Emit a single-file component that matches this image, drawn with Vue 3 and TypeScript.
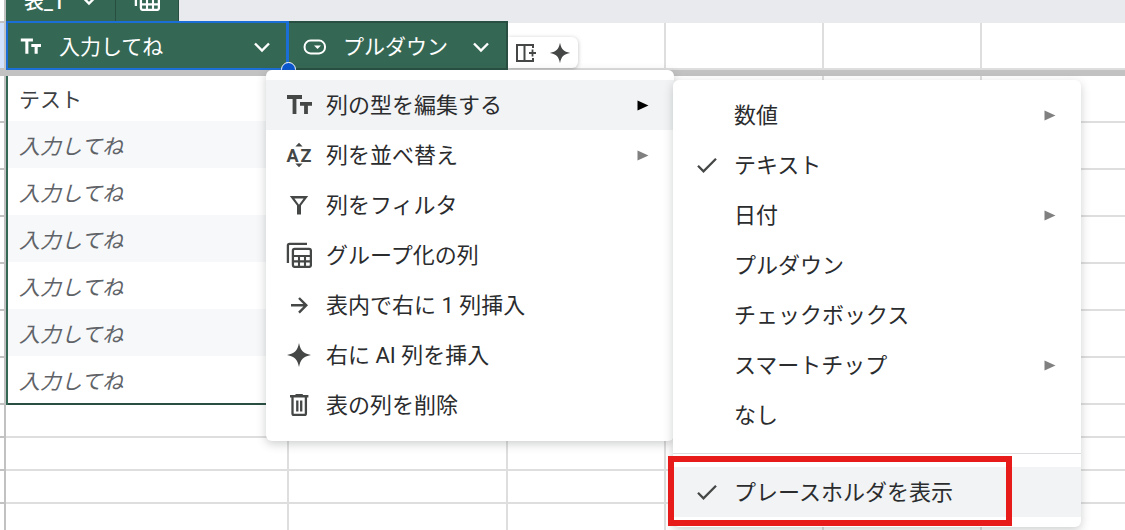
<script setup lang="ts">
import { ref } from 'vue'

interface MenuEntry {
  label: string
  icon?: string
  arrow?: boolean
  checked?: boolean
}

const tableName = ref('表_1')
const rows: { text: string; placeholder: boolean }[] = [
  { text: 'テスト', placeholder: false },
  ...Array.from({ length: 6 }, () => ({ text: '入力してね', placeholder: true })),
]
const emptyRows = 4

const columnMenu: MenuEntry[] = [
  { label: '列の型を編集する', icon: 'type', arrow: true },
  { label: '列を並べ替え', icon: 'sort', arrow: true },
  { label: '列をフィルタ', icon: 'filter' },
  { label: 'グループ化の列', icon: 'group' },
  { label: '表内で右に 1 列挿入', icon: 'arrow' },
  { label: '右に AI 列を挿入', icon: 'spark' },
  { label: '表の列を削除', icon: 'trash' },
]

const typeMenu: MenuEntry[] = [
  { label: '数値', arrow: true },
  { label: 'テキスト', checked: true },
  { label: '日付', arrow: true },
  { label: 'プルダウン' },
  { label: 'チェックボックス' },
  { label: 'スマートチップ', arrow: true },
  { label: 'なし' },
]
</script>

<template>
  <main class="page">
    <svg class="defs" aria-hidden="true">
      <symbol id="i-type" viewBox="0 0 26 26">
        <path d="M1 5H16M8.5 5V22M14 11.800H26M20 11.800V22" fill="none" stroke="currentColor" stroke-width="3.800" />
      </symbol>
      <symbol id="i-sort" viewBox="0 0 26 26">
        <text x="0.500" y="19.500" font-family="Roboto, sans-serif" font-size="18" font-weight="700" fill="currentColor">A</text>
        <text x="14.500" y="19.500" font-family="Roboto, sans-serif" font-size="18" font-weight="700" fill="currentColor">Z</text>
        <path d="M13 .8L16.6 4.400H9.400zM13 25.200L16.600 21.600H9.400z" fill="currentColor" />
      </symbol>
      <symbol id="i-filter" viewBox="0 0 26 26">
        <path d="M3.800 4H22.200L15 13.500V22.500H11V13.500zM8.400 6.500L13 12.700L17.600 6.500z" fill="currentColor" fill-rule="evenodd" />
      </symbol>
      <symbol id="i-group" viewBox="0 0 26 26">
        <path d="M21 1.900H3.500Q1.900 1.900 1.900 3.500V21" fill="none" stroke="currentColor" stroke-width="2.300" />
        <rect x="6.900" y="6.900" width="18" height="18" rx="1.800" fill="none" stroke="currentColor" stroke-width="2.300" />
        <path d="M7 14H25M7 19.400H25M13 14V25M19 14V25" fill="none" stroke="currentColor" stroke-width="2.100" />
      </symbol>
      <symbol id="i-arrow" viewBox="0 0 26 26">
        <path d="M5 13.300H20M13 6L20.300 13.300L13 20.600" fill="none" stroke="currentColor" stroke-width="2.400" />
      </symbol>
      <symbol id="i-spark" viewBox="0 0 26 26">
        <path d="M13 1C14.700 9 17 11.300 25 13C17 14.700 14.700 17 13 25C11.300 17 9 14.700 1 13C9 11.300 11.300 9 13 1z" fill="currentColor" />
      </symbol>
      <symbol id="i-trash" viewBox="0 0 26 26">
        <path d="M4 4.300H22.400M9.500 3.200H16.800" fill="none" stroke="currentColor" stroke-width="2.500" />
        <path d="M6.500 5V21.500Q6.500 22.900 7.900 22.900H18.500Q19.900 22.900 19.900 21.500V5M11.300 8.500V19.500M15.200 8.500V19.500" fill="none" stroke="currentColor" stroke-width="2.300" />
      </symbol>
      <symbol id="i-chevron" viewBox="0 0 16 16">
        <path d="M1 4.500L8 11.500L15 4.500" fill="none" stroke="currentColor" stroke-width="2.400" />
      </symbol>
      <symbol id="i-check" viewBox="0 0 20 20">
        <path d="M1 10.800L6.500 16.300L19 3.800" fill="none" stroke="currentColor" stroke-width="2.300" />
      </symbol>
      <symbol id="i-pill" viewBox="0 0 24 16">
        <rect x="1.600" y="1.600" width="20.400" height="12.800" rx="6" fill="none" stroke="currentColor" stroke-width="2" />
        <path d="M11 6.500H18L14.500 10z" fill="currentColor" />
      </symbol>
      <symbol id="i-addcol" viewBox="0 0 22 20">
        <path d="M18 5V1.900H2V18.100H18V15M9.500 2V18" fill="none" stroke="currentColor" stroke-width="2" />
        <path d="M14 10H21M17.500 6.500V13.500" fill="none" stroke="currentColor" stroke-width="1.800" />
      </symbol>
      <symbol id="i-tri" viewBox="0 0 12 12">
        <path d="M.5 1.500L11.500 6.500L.5 11.500z" fill="currentColor" />
      </symbol>
    </svg>

    <table class="sheet">
      <colgroup>
        <col class="c-head" /><col class="c-a" /><col class="c-b" /><col class="c-n" /><col class="c-n" /><col class="c-n" /><col />
      </colgroup>
      <thead>
        <tr class="strip">
          <td class="rowhead"></td>
          <td colspan="6">
            <div class="tabs">
              <button type="button" class="tab name">{{ tableName }}<svg class="chev"><use href="#i-chevron" /></svg></button>
              <button type="button" class="tab" aria-label="グループ"><svg class="icon"><use href="#i-group" /></svg></button>
            </div>
          </td>
        </tr>
        <tr class="heads">
          <td class="rowhead active"></td>
          <th class="col selected" scope="col">
            <div class="head">
              <svg class="small"><use href="#i-type" /></svg>
              <span>入力してね</span>
              <button type="button" aria-label="列メニュー"><svg class="chev"><use href="#i-chevron" /></svg></button>
            </div>
          </th>
          <th class="col second" scope="col">
            <div class="head">
              <svg class="pill"><use href="#i-pill" /></svg>
              <span>プルダウン</span>
              <button type="button" aria-label="列メニュー"><svg class="chev"><use href="#i-chevron" /></svg></button>
            </div>
          </th>
          <td class="tool-cell">
            <div class="tools">
              <button type="button" aria-label="列を追加"><svg class="addcol"><use href="#i-addcol" /></svg></button>
              <button type="button" aria-label="AI 列"><svg class="spark"><use href="#i-spark" /></svg></button>
            </div>
          </td>
          <td></td><td></td><td></td>
        </tr>
        <tr class="freeze"><td colspan="7"></td></tr>
      </thead>
      <tbody>
        <tr v-for="(row, i) in rows" :key="i" class="data">
          <td class="rowhead"></td>
          <td class="value" :class="{ placeholder: row.placeholder }">{{ row.text }}</td>
          <td class="value"></td>
          <td></td><td></td><td></td><td></td>
        </tr>
        <tr v-for="n in emptyRows" :key="'e' + n" class="empty">
          <td class="rowhead"></td>
          <td></td><td></td><td></td><td></td><td></td><td></td>
        </tr>
      </tbody>
    </table>

    <div class="menu main-menu" role="menu">
      <button v-for="(item, i) in columnMenu" :key="item.label" type="button" role="menuitem" class="item" :class="{ hover: i === 0 }">
        <svg class="icon"><use :href="'#i-' + item.icon" /></svg>
        <span>{{ item.label }}</span>
        <svg v-if="item.arrow" class="tri"><use href="#i-tri" /></svg>
      </button>
    </div>

    <div class="menu type-menu" role="menu">
      <button v-for="item in typeMenu" :key="item.label" type="button" role="menuitemradio" :aria-checked="!!item.checked" class="item">
        <svg class="check"><use v-if="item.checked" href="#i-check" /></svg>
        <span>{{ item.label }}</span>
        <svg v-if="item.arrow" class="tri"><use href="#i-tri" /></svg>
      </button>
      <hr />
      <button type="button" role="menuitemcheckbox" aria-checked="true" class="item hover">
        <svg class="check"><use href="#i-check" /></svg>
        <span>プレースホルダを表示</span>
        <i class="mark"></i>
      </button>
    </div>
  </main>
</template>

<style>
body {
  margin: 0;
}
</style>

<style scoped>
.page {
  position: relative;
  height: 100vh;
  overflow: hidden;
  background: #fff;
  color: #2b2c2e;
  font-family: Roboto, "Noto Sans CJK JP", sans-serif;
}
.defs {
  position: absolute;
  width: 0;
  height: 0;
}
svg {
  display: block;
  flex: none;
}
button {
  margin: 0;
  padding: 0;
  border: 0;
  background: none;
  color: inherit;
  font: inherit;
  text-align: left;
}
.sheet {
  width: 100%;
  table-layout: fixed;
  border-collapse: separate;
  border-spacing: 0;
}
.c-head { width: 6px; }
.c-a { width: 283px; }
.c-b { width: 219px; }
.c-n { width: 158px; }
td,
th {
  box-sizing: border-box;
  padding: 0;
  border: solid #dedede;
  border-width: 0 2px 2px 0;
  font-weight: 400;
  text-align: left;
}
td:last-child {
  border-right: 0;
}
.rowhead {
  border-color: #c2c2c2;
}
.rowhead.active {
  background: #d3e3fd;
}
.strip td {
  height: 23px;
  border-bottom: 0;
}
.strip td + td {
  border: 0;
  background: #e8eaed;
}
.strip .rowhead {
  border-bottom: 2px solid #c2c2c2;
}
.tabs {
  display: flex;
  align-items: flex-end;
  height: 23px;
  overflow: hidden;
}
.tab {
  display: flex;
  align-items: center;
  box-sizing: border-box;
  height: 50px;
  padding: 0 18px;
  border-right: 1px solid #284f42;
  background: #356854;
  color: #fff;
  font-size: 21px;
}
.tab.name {
  gap: 17px;
  height: 46px;
  font-size: 20px;
  font-weight: 500;
}
.heads td,
.heads th {
  height: 47px;
}
.col {
  position: relative;
  border: 0;
  background: #356854;
  color: #fff;
}
.selected::before,
.second::before {
  content: "";
  position: absolute;
  inset: -2px 0 0 0;
  border: 2px solid #1b6ed6;
  border-right-width: 3px;
  pointer-events: none;
}
.second::before {
  border: 2px solid #284f42;
  border-left: 0;
}
.selected::after {
  content: "";
  position: absolute;
  z-index: 1;
  right: -7px;
  bottom: -7px;
  box-sizing: border-box;
  width: 15px;
  height: 15px;
  border: 1px solid #fff;
  border-radius: 50%;
  background: #0b57d0;
}
.head {
  display: flex;
  align-items: center;
  padding: 0 19px 0 14px;
  font-size: 21px;
  line-height: 46px;
}
.head span {
  flex: 1;
  margin-left: 18px;
}
.second .head span {
  margin-left: 16px;
}
.tool-cell {
  vertical-align: bottom;
}
.tools {
  display: flex;
  align-items: center;
  gap: 12px;
  box-sizing: border-box;
  width: 70px;
  height: 31px;
  padding-left: 7px;
  border-radius: 0 6px 6px 0;
  background: #fff;
  box-shadow: 0 1px 4px rgba(60, 64, 67, 0.35);
  color: #444746;
}
.freeze td {
  height: 6px;
  border: 0;
  background: #c2c2c2;
}
.data td {
  height: 47px;
}
.data .value {
  padding: 2px 0 0 11px;
  border: 0;
  border-left: 2px solid #356854;
  box-shadow: inset 0 -2px #f6f8f9;
  color: #3c4043;
  font-size: 21px;
  line-height: 45px;
}
.data:nth-child(even) .value {
  background: #f6f8f9;
  box-shadow: inset 0 -2px #fff;
}
.data:nth-child(7) .value {
  box-shadow: inset 0 -2px #284f42;
}
.data .placeholder {
  color: #5f6368;
  font-style: italic;
}
.empty td {
  height: 33px;
}
.menu {
  position: absolute;
  z-index: 2;
  box-sizing: border-box;
  padding: 10px 0;
  border-radius: 6px;
  background: #fff;
  box-shadow: 0 3px 10px rgba(60, 64, 67, 0.25);
}
.main-menu {
  top: 70px;
  left: 266px;
  width: 408px;
  padding-bottom: 11px;
}
.type-menu {
  top: 80px;
  left: 673px;
  width: 408px;
}
.item {
  position: relative;
  display: flex;
  align-items: center;
  gap: 14px;
  box-sizing: border-box;
  width: 100%;
  height: 50px;
  padding: 0 25px 0 20px;
  font-size: 22px;
  line-height: 48px;
}
.type-menu .item {
  gap: 17px;
  padding-left: 24px;
}
.item.hover {
  background: #f1f3f4;
}
.item span {
  flex: 1;
  padding-top: 2px;
}
.icon {
  width: 26px;
  height: 26px;
  color: #444746;
}
.tab .icon {
  color: #fff;
}
.chev {
  width: 16px;
  height: 16px;
}
.small {
  width: 21px;
  height: 21px;
}
.pill {
  width: 24px;
  height: 16px;
}
.addcol {
  width: 22px;
  height: 20px;
}
.spark {
  width: 22px;
  height: 22px;
}
.check {
  width: 20px;
  height: 20px;
  color: #444746;
}
.tri {
  width: 12px;
  height: 12px;
  color: #808080;
}
.hover .tri {
  color: #000;
}
hr {
  height: 1px;
  margin: 13px 0;
  border: 0;
  background: #dadce0;
}
.mark {
  position: absolute;
  inset: -11px 69px -9px -5px;
  border: 6px solid #e81b1b;
}
</style>
